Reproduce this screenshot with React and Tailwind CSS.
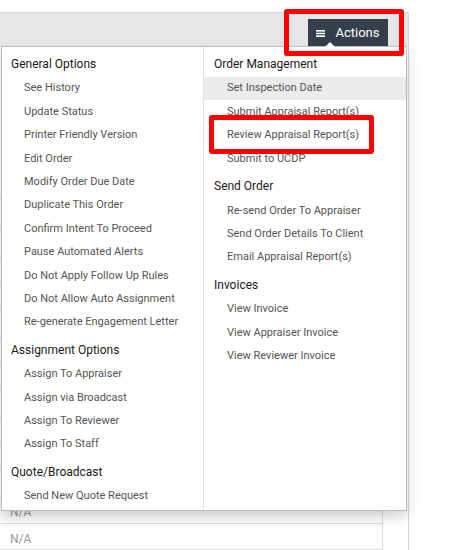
import React from "react";

const leftGroups = [
  {
    title: "General Options",
    items: [
      "See History",
      "Update Status",
      "Printer Friendly Version",
      "Edit Order",
      "Modify Order Due Date",
      "Duplicate This Order",
      "Confirm Intent To Proceed",
      "Pause Automated Alerts",
      "Do Not Apply Follow Up Rules",
      "Do Not Allow Auto Assignment",
      "Re-generate Engagement Letter",
    ],
  },
  {
    title: "Assignment Options",
    items: ["Assign To Appraiser", "Assign via Broadcast", "Assign To Reviewer", "Assign To Staff"],
  },
  { title: "Quote/Broadcast", items: ["Send New Quote Request"] },
];

const rightGroups = [
  {
    title: "Order Management",
    items: ["Set Inspection Date", "Submit Appraisal Report(s)", "Review Appraisal Report(s)", "Submit to UCDP"],
  },
  {
    title: "Send Order",
    items: ["Re-send Order To Appraiser", "Send Order Details To Client", "Email Appraisal Report(s)"],
  },
  {
    title: "Invoices",
    items: ["View Invoice", "View Appraiser Invoice", "View Reviewer Invoice"],
  },
];

const MenuColumn = ({ groups, className, headPad, itemPad }) => (
  <div className={className}>
    {groups.map((g, gi) => (
      <div key={g.title} className={gi > 0 ? "mt-[3px]" : ""}>
        <div className={`h-[25.5px] flex items-center ${headPad} text-[12px] text-[#1a1a1a]`}>
          {g.title}
        </div>
        {g.items.map((item) => (
          <div
            key={item}
            className={`h-[23.4px] flex items-center ${itemPad} text-[11px] text-[#555] ${
              item === "Set Inspection Date" ? "bg-[#ececec]" : ""
            }`}
          >
            {item}
          </div>
        ))}
      </div>
    ))}
  </div>
);

export default function App() {
  const rows = Array.from({ length: 12 });

  return (
    <div className="relative w-[455px] h-[550px] bg-white overflow-hidden font-['Roboto',sans-serif]">
      {/* PANEL BEHIND */}
      <div className="mt-[12px] w-[409px] h-[538px] border-t border-r border-[#d8d8d8] flex flex-col">
        <div className="h-[33px] bg-[#e7e7e7] flex justify-end pr-[20px] shrink-0">
          <button className="mt-[6px] h-[28px] w-[80px] bg-[#343f4b] text-white text-[13px] flex items-center justify-center gap-[10px]">
            <svg width="9" height="7" viewBox="0 0 9 7">
              <rect x="0" y="0" width="9" height="1.6" fill="#fff" />
              <rect x="0" y="2.7" width="9" height="1.6" fill="#fff" />
              <rect x="0" y="5.4" width="9" height="1.6" fill="#fff" />
            </svg>
            Actions
          </button>
        </div>

        {/* TABLE */}
        <div className="w-[383px] flex-1 border-r border-[#d8d8d8] bg-[#fdfdfd]">
          <div className="h-[154px] border-b border-[#dcdcdc]" />
          <div className="h-[30px] border-b border-[#dcdcdc]" />
          {rows.map((_, i) => (
            <div
              key={i}
              className="h-[26.7px] border-b border-[#dcdcdc] flex items-center pt-[5px] pl-[10px] text-[12px] text-[#999]"
            >
              {i >= 10 ? "N/A" : ""}
            </div>
          ))}
        </div>
      </div>

      {/* CARET */}
      <div className="absolute left-[325px] top-[42px] w-0 h-0 border-x-[5px] border-x-transparent border-b-[5px] border-b-white z-20" />

      {/* DROPDOWN */}
      <div className="absolute left-[1px] top-[46px] w-[406px] h-[465px] bg-white border border-[#bcbcbc] shadow-[0_6px_12px_rgba(0,0,0,0.18)] flex pt-[4.5px] z-10">
        <MenuColumn groups={leftGroups} className="w-[201px]" headPad="pl-[9px]" itemPad="pl-[22px]" />
        <div className="flex-1 border-l border-[#e2e2e2] -mt-[4.5px] pt-[4.5px]">
          <MenuColumn groups={rightGroups} headPad="pl-[10px]" itemPad="pl-[23px]" />
        </div>
      </div>

      {/* HIGHLIGHTS */}
      <div className="absolute left-[284px] top-[9px] w-[120px] h-[47px] border-[5px] border-[#ff0000] rounded-[3px] z-30" />
      <div className="absolute left-[209px] top-[115px] w-[165px] h-[39px] border-[5px] border-[#ff0000] rounded-[3px] z-30" />
    </div>
  );
}
